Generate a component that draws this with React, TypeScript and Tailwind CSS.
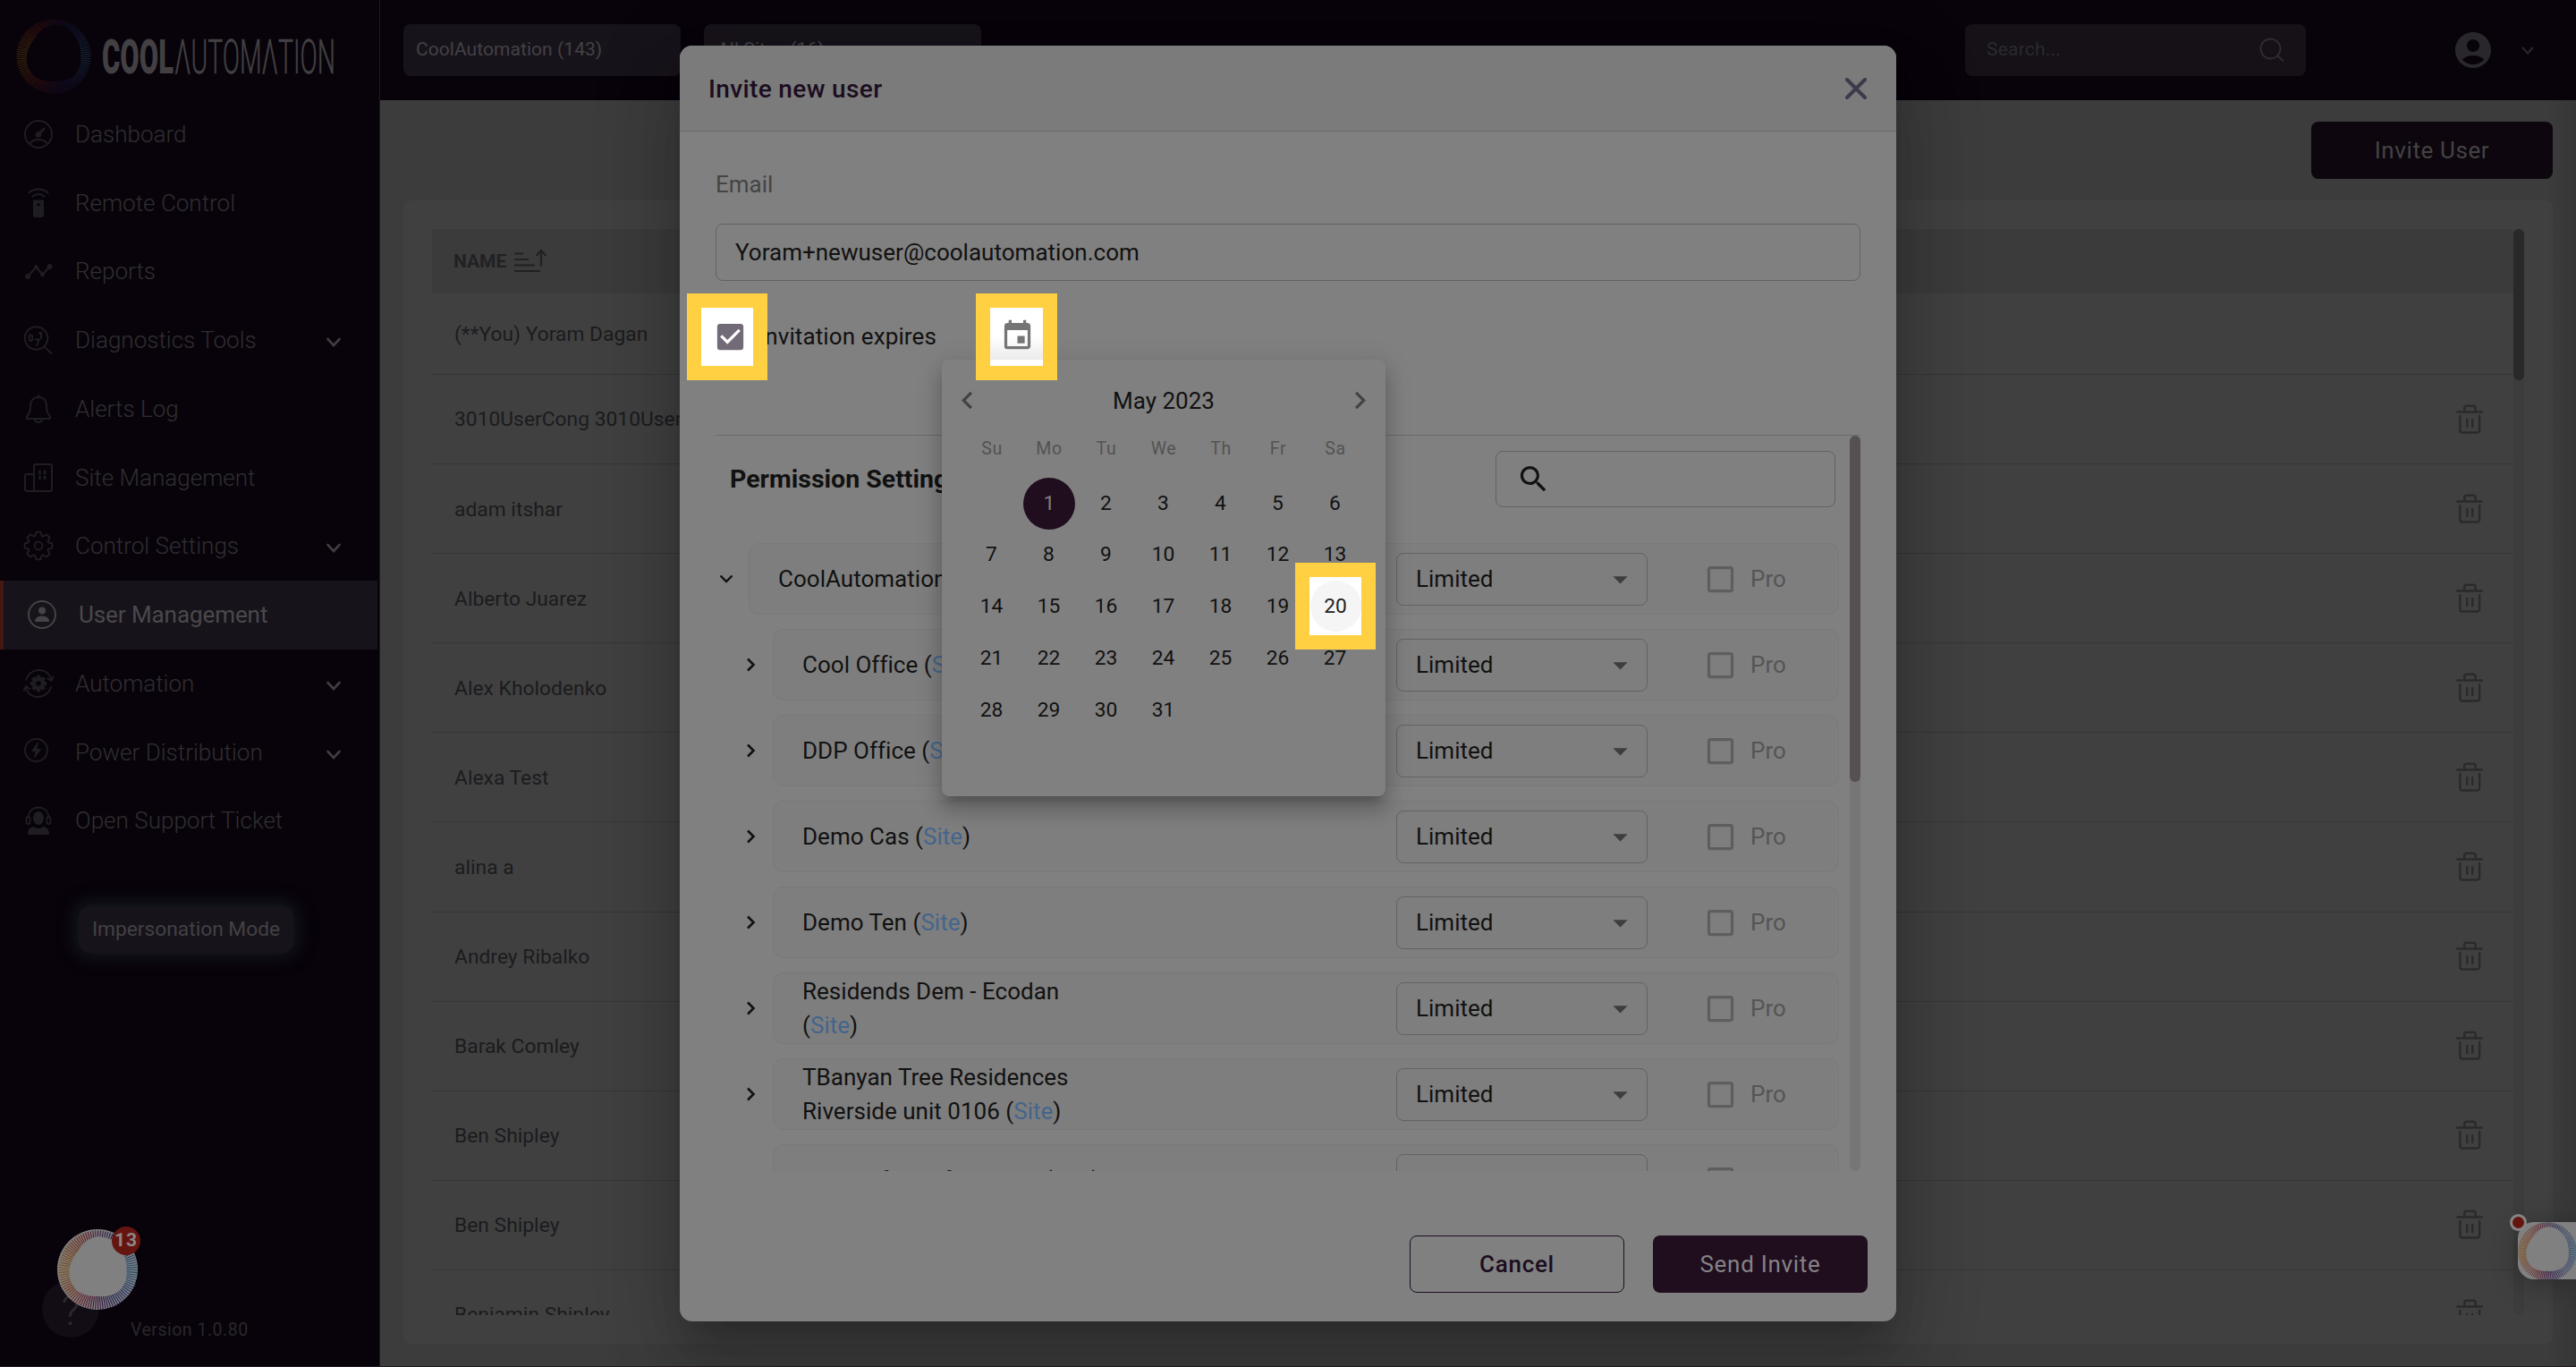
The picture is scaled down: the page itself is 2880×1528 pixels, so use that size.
import React from "react";
import { MdAccountCircle, MdCheckBox, MdEvent, MdSearch, MdKeyboardArrowLeft, MdKeyboardArrowRight, MdCheckBoxOutlineBlank, MdArrowDropDown } from "react-icons/md";

const INNER = [0.72, 0.75, 0.75, 0.7, 0.66, 0.69, 0.74, 0.74, 0.72, 0.69, 0.69, 0.78, 0.84, 0.83, 0.78, 0.74];
const HUES = [
  [78, 160, 225], [75, 130, 215], [70, 90, 190], [75, 60, 160], [110, 40, 120], [180, 50, 80], [225, 85, 60], [240, 130, 50],
  [250, 165, 60], [245, 145, 55], [230, 95, 50], [205, 50, 60], [120, 50, 120], [60, 60, 160], [70, 100, 200], [75, 135, 220],
];

function mix(a: number, b: number, t: number) {
  return a + (b - a) * t;
}

function Ring({ size, dim, stroke }: { size: number; dim: number; stroke: number }) {
  const count = 96;
  const lines = Array.from({ length: count }, (_, i) => {
    const angle = (i / count) * Math.PI * 2;
    const pos = (i / count) * 16;
    const k = Math.floor(pos);
    const t = pos - k;
    const inner = mix(INNER[k], INNER[(k + 1) % 16], t) * 50;
    const c = HUES[k].map((v, n) => Math.round(mix(v, HUES[(k + 1) % 16][n], t) * dim));
    return (
      <line
        key={i}
        x1={50 + Math.cos(angle) * inner}
        y1={50 + Math.sin(angle) * inner}
        x2={50 + Math.cos(angle) * 49.5}
        y2={50 + Math.sin(angle) * 49.5}
        stroke={`rgb(${c.join(",")})`}
        strokeWidth={stroke}
      />
    );
  });
  return (
    <svg width={size} height={size} viewBox="0 0 100 100" className="shrink-0">
      {lines}
    </svg>
  );
}

function Ico({ children, sw = 2 }: { children: React.ReactNode; sw?: number }) {
  return (
    <svg width="34" height="34" viewBox="0 0 34 34" fill="none" stroke="currentColor" strokeWidth={sw} strokeLinecap="round" strokeLinejoin="round" className="shrink-0">
      {children}
    </svg>
  );
}

function gearPath(cx: number, cy: number, ro: number, ri: number, teeth: number) {
  const pts: string[] = [];
  for (let i = 0; i < teeth; i++) {
    const base = (i / teeth) * Math.PI * 2 - Math.PI / 2;
    const w = Math.PI / teeth;
    [[-0.85, ri], [-0.42, ro], [0.42, ro], [0.85, ri]].forEach(([f, r]) => {
      const a = base + w * f;
      pts.push(`${(cx + Math.cos(a) * r).toFixed(2)} ${(cy + Math.sin(a) * r).toFixed(2)}`);
    });
  }
  return `M${pts.join("L")}Z`;
}

const icons: Record<string, React.ReactNode> = {
  dashboard: (
    <Ico>
      <circle cx="17" cy="17" r="15" />
      <path d="M7.5 27.500C11 21.500 23 21.500 26.5 27.500" />
      <circle cx="17" cy="17.5" r="2.2" fill="currentColor" />
      <path d="M17.5 16.5L23 11.200" strokeWidth="2.600" />
    </Ico>
  ),
  remote: (
    <Ico>
      <path d="M6.500 5.500C12 .3 22 .3 27.500 5.500M10.500 9.500C14 6 20 6 23.500 9.500" />
      <path d="M12 13.500h10a1 1 0 0 1 1 1V31a2 2 0 0 1-2 2h-8a2 2 0 0 1-2-2V14.500a1 1 0 0 1 1-1zM17 17a1.800 1.800 0 1 0 0 3.600a1.800 1.800 0 0 0 0-3.600z" fill="currentColor" fillRule="evenodd" stroke="none" />
    </Ico>
  ),
  reports: (
    <Ico sw={2.4}>
      <path d="M5 23L14.500 12.500l7 8.500L29.500 12" />
      <circle cx="5" cy="23" r="1.800" fill="currentColor" />
      <circle cx="14.500" cy="12.500" r="1.200" fill="currentColor" />
      <circle cx="21.500" cy="21" r="1.200" fill="currentColor" />
      <circle cx="29.500" cy="12" r="1.800" fill="currentColor" />
    </Ico>
  ),
  diagnostics: (
    <Ico>
      <circle cx="14.500" cy="15" r="12.800" />
      <path d="M23.500 24.500L31.500 32" />
      <rect x="6.500" y="11.500" width="3.600" height="6.500" rx="1.800" />
      <path d="M18 9.500l2-1v7M13.500 16.500h4.500l-2.800 6.500" />
    </Ico>
  ),
  bell: (
    <Ico>
      <path d="M17 2v1.800M17 4c-6 0-9 4.500-9 10 0 7-2 9.500-4 11.500v2.500h26v-2.500c-2-2-4-4.500-4-11.500 0-5.500-3-10-9-10zM13 29c.5 4 7.500 4 8 0" />
    </Ico>
  ),
  site: (
    <Ico>
      <path d="M12 13H4a2 2 0 0 0-2 2v15a2 2 0 0 0 2 2h8zM12 4a2 2 0 0 1 2-2h16a2 2 0 0 1 2 2v26a2 2 0 0 1-2 2H12z" />
      <path d="M18.500 10v2M24 10v2M18.500 16v2M24 16v2" strokeWidth="2.600" strokeLinecap="square" />
    </Ico>
  ),
  gear: (
    <Ico>
      <path d={gearPath(17, 17, 15.5, 11.5, 8)} />
      <circle cx="17" cy="17" r="4.400" />
    </Ico>
  ),
  user: (
    <Ico>
      <circle cx="17" cy="17" r="15" />
      <circle cx="17" cy="12.500" r="4" fill="currentColor" stroke="none" />
      <path d="M9 24.500c0-8 16-8 16 0v.5H9z" fill="currentColor" stroke="none" />
    </Ico>
  ),
  automation: (
    <Ico sw={1.8}>
      <path d="M3 13C7-1 27-2 31 12M27 11.500l4.500 2.500 2-5M31 21C27 35 7 36 3 22M.800 25l2-5 4.500 2.800" />
      <path d={gearPath(17, 17, 9, 6.5, 8)} fill="currentColor" strokeWidth="1" />
      <circle cx="17" cy="17" r="2.800" fill="#08030a" stroke="none" />
    </Ico>
  ),
  power: (
    <Ico>
      <circle cx="14.500" cy="14.500" r="12.500" />
      <path d="M16.500 6l-7 9.500h4.500L12.500 23l7-9.500H15z" fill="currentColor" strokeWidth="1" />
    </Ico>
  ),
  support: (
    <Ico sw={1.8}>
      <path d="M6 13C6-1 28-1 28 13" />
      <rect x="3.500" y="13" width="4" height="8" rx="2" />
      <rect x="26.500" y="13" width="4" height="8" rx="2" />
      <ellipse cx="17" cy="14.500" rx="6" ry="7.500" fill="currentColor" stroke="none" />
      <path d="M5 33c0-5 2-8.500 6.500-9 3 2.500 8 2.500 11 0C27 24.500 29 28 29 33z" fill="currentColor" stroke="none" />
    </Ico>
  ),
};

const nav: { label: string; icon: string; menu?: boolean; active?: boolean }[] = [
  { label: "Dashboard", icon: "dashboard" },
  { label: "Remote Control", icon: "remote" },
  { label: "Reports", icon: "reports" },
  { label: "Diagnostics Tools", icon: "diagnostics", menu: true },
  { label: "Alerts Log", icon: "bell" },
  { label: "Site Management", icon: "site" },
  { label: "Control Settings", icon: "gear", menu: true },
  { label: "User Management", icon: "user", active: true },
  { label: "Automation", icon: "automation", menu: true },
  { label: "Power Distribution", icon: "power", menu: true },
  { label: "Open Support Ticket", icon: "support" },
];

function Sidebar() {
  return (
    <aside className="flex h-full w-[425px] shrink-0 flex-col border-r border-[#1c191f] bg-[#08030a]">
      <div className="flex h-[111.500px] shrink-0 items-center pt-[15px] pl-[18px]">
        <Ring size={84} dim={0.27} stroke={1.2} />
        <svg width="262" height="44" viewBox="0 0 262 44" className="mt-0.5 ml-3 overflow-visible" fontFamily="Roboto">
          <text x="0" y="40" fontSize="53" fontWeight="900" fill="#424043" textLength="80" lengthAdjust="spacingAndGlyphs">COOL</text>
          <text x="81" y="40" fontSize="53" fontWeight="300" fill="#424043" stroke="#424043" strokeWidth="0.500" textLength="180" lengthAdjust="spacingAndGlyphs">ΛUTOMΛTION</text>
        </svg>
      </div>
      <nav className="flex flex-col">
        {nav.map((n) => (
          <div
            key={n.label}
            className={
              n.active
                ? "mr-0.5 flex h-[76.75px] items-center border-l-4 border-[#451912] bg-[#17131a] pl-[26px] font-normal text-[#4a484c]"
                : "flex h-[76.75px] items-center pl-[26px] font-light text-[#302e32]"
            }
          >
            <span className={n.active ? "text-[#454347]" : "text-[#1f1c22]"}>{icons[n.icon]}</span>
            <span className={n.active ? "ml-[24px] flex-1 text-[26px] leading-none tracking-[-0.080px]" : "ml-[24px] flex-1 text-[26px] leading-none tracking-[0.020px]"}>{n.label}</span>
            {n.menu && (
              <svg width="16" height="12" viewBox="0 0 16 12" className="mt-1.5 mr-[43px]" fill="none" stroke="#3f3d41" strokeWidth="2.6" strokeLinecap="round">
                <path d="M1.500 2L8 9 14.500 2" />
              </svg>
            )}
          </div>
        ))}
      </nav>
      <div className="mt-[57px] ml-[88px] flex h-[52px] w-[240px] shrink-0 items-center justify-center rounded-[12px] bg-[#17131a] text-[22.75px] text-[#434146] shadow-[0_0_20px_3px_#161b25]">
        Impersonation Mode
      </div>
      <div className="relative mt-auto h-[154px] shrink-0">
        <div className="absolute top-[57px] left-[47px] flex size-16 items-center justify-center rounded-full bg-[#120d15] pt-1 text-[46px] font-light text-[#2b292e]">?</div>
        <div className="absolute top-0 left-[64px] flex size-[90px] items-center justify-center rounded-full bg-[#808080]">
          <Ring size={89} dim={0.48} stroke={1.2} />
        </div>
        <div className="absolute -top-[3px] left-[125px] flex size-8 items-center justify-center rounded-full bg-[#64150f] text-[21px] font-bold tracking-[1px] text-[#8c8686]">13</div>
        <div className="absolute top-[101px] left-[146px] text-[19.5px] leading-6 tracking-[0.5px] text-[#29272b]">Version 1.0.80</div>
      </div>
    </aside>
  );
}

function TopBar() {
  return (
    <header className="flex h-[112px] shrink-0 items-start bg-[#08030a] pt-[27px] pl-[26px] text-[21px] leading-[56px]">
      <div className="h-[58px] w-[310px] rounded-[8px] bg-[#17131a] pl-[14px] tracking-[0.060px] text-[#434146]">CoolAutomation (143)</div>
      <div className="ml-[26px] h-[58px] w-[310px] rounded-[8px] bg-[#17131a] pl-[15px] tracking-[0.060px] text-[#434146]">All Sites (16)</div>
      <div className="ml-auto flex h-[58px] w-[381px] justify-between rounded-[8px] bg-[#151117] pr-6 pl-6 text-[21px] tracking-[0.2px] text-[#2b292d]">
        Search...
        <svg width="28" height="28" viewBox="0 0 28 28" className="mt-[15px]" fill="none" stroke="#2f2d31" strokeWidth="1.800" strokeLinecap="round">
          <circle cx="12.500" cy="12.500" r="11" />
          <path d="M20.500 20.500L26.500 26" />
        </svg>
      </div>
      <MdAccountCircle className="mt-[5px] ml-[163px] size-12 text-[#29272c]" />
      <svg width="14" height="10" viewBox="0 0 14 10" className="mt-[25px] mr-[47px] ml-[30px]" fill="none" stroke="#29272c" strokeWidth="2" strokeLinecap="round">
        <path d="M1.500 1.500L7 7.500l5.500-6" />
      </svg>
    </header>
  );
}

const users = ["(**You) Yoram Dagan", "3010UserCong 3010UserCong", "adam itshar", "Alberto Juarez", "Alex Kholodenko", "Alexa Test", "alina a", "Andrey Ribalko", "Barak Comley", "Ben Shipley", "Ben Shipley", "Benjamin Shipley"];

function Trash() {
  return (
    <svg width="30" height="34" viewBox="0 0 30 34" className="mr-[34px] shrink-0" fill="none" stroke="#2a2a2a" strokeWidth="2.400" strokeLinecap="round" strokeLinejoin="round">
      <path d="M1.200 8.500h27.600M9.200 8V4.200a2.500 2.500 0 0 1 2.500-2.500h7.400a2.500 2.500 0 0 1 2.500 2.500v3.800M4.400 13v16a2.500 2.500 0 0 0 2.500 2.500h16.700a2.500 2.500 0 0 0 2.500-2.500v-16" />
      <path d="M12.200 17v8M18.200 17v8" />
    </svg>
  );
}

function Content() {
  return (
    <main className="flex flex-1 flex-col bg-[#3c3c3c] pr-[26px] pb-[26px] pl-[26px]">
      <div className="flex justify-end pt-6">
        <div className="flex h-16 w-[270px] items-center justify-center rounded-[8px] bg-[#0d060e] text-[26px] tracking-[0.600px] text-[#434343]">Invite User</div>
      </div>
      <div className="mt-6 flex flex-1 rounded-[8px] bg-[#404040] pt-8 pr-8 pb-8 pl-[32px]">
        <div className="h-[1214px] flex-1 overflow-hidden">
          <div className="flex h-[72px] items-center gap-2 bg-[#3b3b3b] pl-6 text-[21px] font-bold text-[#212124]">
            <span className="pt-px">NAME</span>
            <svg width="38" height="28" viewBox="0 0 38 28" fill="none" stroke="currentColor" strokeWidth="2.200">
              <path d="M1 5.500h10M1 12h16M1 18.500h23M1 25h29M31 19.500V3M25.500 8L31 2l5.500 6" />
            </svg>
          </div>
          {users.map((u, i) => (
            <div
              key={i}
              className={
                i === 0
                  ? "flex h-[91px] items-center border-b border-[#363636] pl-[25px]"
                  : "flex h-[100.100px] items-center justify-between border-b border-[#363636] pl-[25px]"
              }
            >
              <span className="pt-0.5 text-[22.750px] tracking-[0.040px] text-[#1b1b1e]">{u}</span>
              {i > 0 && <Trash />}
            </div>
          ))}
        </div>
        <div className="h-[1214px] w-3 rounded-full bg-[#3c3c3c]">
          <div className="h-[169px] rounded-full bg-[#292929]" />
        </div>
      </div>
    </main>
  );
}

const sites: { name: string; root?: boolean }[] = [
  { name: "CoolAutomation", root: true },
  { name: "Cool Office" },
  { name: "DDP Office" },
  { name: "Demo Cas" },
  { name: "Demo Ten" },
  { name: "Residends Dem - Ecodan" },
  { name: "TBanyan Tree Residences Riverside unit 0106" },
  { name: "Tours of Comfort Suite" },
];

function SiteRow({ name, root }: { name: string; root?: boolean }) {
  return (
    <div className="flex h-20 items-center">
      <div className={root ? "flex w-[37px] pl-[4px]" : "flex w-16 pl-[33px]"}>
        {root ? (
          <svg width="16" height="12" viewBox="0 0 16 12" fill="none" stroke="#111" strokeWidth="2.400">
            <path d="M1.500 2.500L8 9 14.500 2.500" />
          </svg>
        ) : (
          <svg width="12" height="16" viewBox="0 0 12 16" fill="none" stroke="#111" strokeWidth="2.600">
            <path d="M3 1.500L9.500 8 3 14.500" />
          </svg>
        )}
      </div>
      <div className="flex h-20 flex-1 items-center rounded-[12px] border border-[#797979] bg-[#7e7e7e] pl-8">
        <div className="w-[345px] text-[26px] leading-[38.5px] tracking-[0.020px] text-[#111]">
          {name} (<span className="text-[#44658c]">Site</span>)
        </div>
        <div className="ml-auto flex h-[59px] w-[281px] items-center justify-between rounded-[8px] border border-[#626262] pr-[10px] pl-[21px] text-[26px] text-[#111]">
          Limited
          <MdArrowDropDown className="size-[39px] text-[#3e3e3e]" />
        </div>
        <MdCheckBoxOutlineBlank className="ml-[62px] size-[39px] text-[#5e5e5e]" />
        <div className="w-[112px] pl-[14px] text-[26px] text-[#555]">Pro</div>
      </div>
    </div>
  );
}

function DatePicker() {
  const days = [0, ...Array.from({ length: 31 }, (_, i) => i + 1)];
  return (
    <div className="absolute top-[351px] left-[293px] h-[488px] w-[496px] rounded-[8px] bg-[#808080] px-6 shadow-[0_10px_10px_-6px_rgba(0,0,0,0.2),0_16px_20px_2px_rgba(0,0,0,0.14),0_6px_28px_4px_rgba(0,0,0,0.12)]">
      <div className="-mx-[15px] flex h-[90px] items-center justify-between text-[26px] text-[#111]">
        <MdKeyboardArrowLeft className="size-[39px] text-[#434343]" />
        <span className="pt-0.5">May 2023</span>
        <MdKeyboardArrowRight className="size-[39px] text-[#434343]" />
      </div>
      <div className="grid grid-cols-7 text-center text-[19.500px] leading-[20px] tracking-[0.650px] text-[#535353]">
        {["Su", "Mo", "Tu", "We", "Th", "Fr", "Sa"].map((d) => (
          <span key={d}>{d}</span>
        ))}
      </div>
      <div className="mt-[22px] grid grid-cols-7 justify-items-center text-[22.750px] text-[#111]">
        {days.map((d) => (
          <div key={d} className="flex h-[57.700px] items-center">
            <span className={d === 1 ? "flex size-[58px] items-center justify-center rounded-full bg-[#200d1e] text-[#808080]" : "pr-px"}>{d || ""}</span>
          </div>
        ))}
      </div>
    </div>
  );
}

function Modal() {
  return (
    <div className="absolute inset-0 flex items-start justify-center pt-[51px]">
      <section className="relative flex h-[1426px] w-[1360px] flex-col rounded-[14px] bg-[#808080] shadow-[0_22px_30px_-14px_rgba(0,0,0,0.2),0_48px_76px_6px_rgba(0,0,0,0.14),0_18px_92px_16px_rgba(0,0,0,0.12)]">
        <div className="flex h-[96px] items-center justify-between rounded-t-[14px] border-b border-[#6a6a6a] bg-[#7b7b7b] pr-[33px] pl-8">
          <h2 className="pt-0.5 text-[28px] font-medium tracking-[0.360px] text-[#1b0d20]">Invite new user</h2>
          <svg width="24" height="24" viewBox="0 0 24 24" fill="none" stroke="#3e394b" strokeWidth="4" strokeLinecap="round">
            <path d="M2 2l20 20M22 2L2 22" />
          </svg>
        </div>
        <div className="flex flex-col px-10">
          <label className="mt-[40px] text-[26px] leading-[38px] text-[#444446]">Email</label>
          <div className="mt-[25px] flex h-16 items-center rounded-[8px] border border-[#626262] pl-[21px] text-[26px] tracking-[0.020px] text-[#111]">Yoram+newuser@coolautomation.com</div>
          <div className="mt-11 flex h-9 items-center pl-[48px] text-[26px] tracking-[0.120px] text-[#111]">Invitation expires</div>
          <div className="mt-[92px] flex h-[823px] overflow-hidden border-t border-[#696969]">
            <div className="flex-1">
              <div className="mt-[17px] mb-10 flex h-[63px] items-center justify-between pr-4 pl-4">
                <h3 className="pt-px text-[28.500px] font-bold text-[#111]">Permission Settings</h3>
                <div className="flex h-[63px] w-[380px] items-center rounded-[8px] border border-[#626262] pl-[22px]">
                  <MdSearch className="size-[39px] text-[#111]" />
                </div>
              </div>
              <div className="mr-3 flex flex-col gap-4">
                {sites.map((s) => (
                  <SiteRow key={s.name} name={s.name} root={s.root} />
                ))}
              </div>
            </div>
            <div className="h-[822px] w-3 rounded-full bg-[#767676]">
              <div className="h-[387px] rounded-full bg-[#565055]" />
            </div>
          </div>
          <div className="mt-[72px] flex justify-end gap-8 text-[26px] font-medium tracking-[0.700px]">
            <div className="flex h-16 w-60 items-center justify-center rounded-[8px] border border-[#1b0d20] text-[#1b0d20]">Cancel</div>
            <div className="-mr-2 flex h-16 w-60 items-center justify-center rounded-[8px] bg-[#200d1e] font-normal text-[#858285]">Send Invite</div>
          </div>
        </div>

        <DatePicker />

        <div className="absolute top-[277px] left-[8px] flex h-[97px] w-[90px] items-center justify-center border-[16px] border-[#ffd042] bg-white">
          <MdCheckBox className="ml-[6px] size-[39px] shrink-0 text-[#726a76]" />
        </div>
        <div className="absolute top-[277px] left-[331px] flex h-[97px] w-[91px] flex-col items-center border-[16px] border-[#ffd042] bg-white">
          <div className="flex h-[58px] w-full justify-center bg-linear-to-b from-white from-55% to-[#ebebeb] pt-3">
            <MdEvent className="ml-px size-[39px] shrink-0 text-[#757575]" />
          </div>
        </div>
        <div className="absolute top-[578px] left-[688px] flex h-[97px] w-[90px] items-center justify-center border-[16px] border-[#ffd042] bg-white">
          <span className="flex size-[57px] shrink-0 items-center justify-center rounded-full bg-[#f5f5f5] pt-0.5 text-[22.750px] text-[#222]">20</span>
        </div>
      </section>
    </div>
  );
}

export default function App() {
  return (
    <div className="relative flex h-[1528px] w-[2880px] overflow-hidden bg-[#3c3c3c] font-['Roboto',sans-serif]">
      <Sidebar />
      <div className="flex flex-1 flex-col">
        <TopBar />
        <Content />
      </div>
      <Modal />
      <div className="absolute top-0 right-0 h-full w-[34px] bg-linear-to-r from-transparent to-black/10" />
      <div className="absolute top-[1366px] right-0 h-16 w-[65px] rounded-l-[18px] bg-[#808080] shadow-[0_4px_30px_rgba(0,0,0,0.3)]">
        <div className="absolute top-0 left-0 h-16 w-[65px] overflow-hidden">
          <Ring size={66} dim={0.5} stroke={1.3} />
        </div>
        <div className="absolute -top-[9px] -left-[9px] size-[19px] rounded-full border-[3px] border-[#858585] bg-[#64150f]" />
      </div>
      <div className="absolute bottom-0 left-0 h-px w-full bg-[#241a24]" />
    </div>
  );
}
